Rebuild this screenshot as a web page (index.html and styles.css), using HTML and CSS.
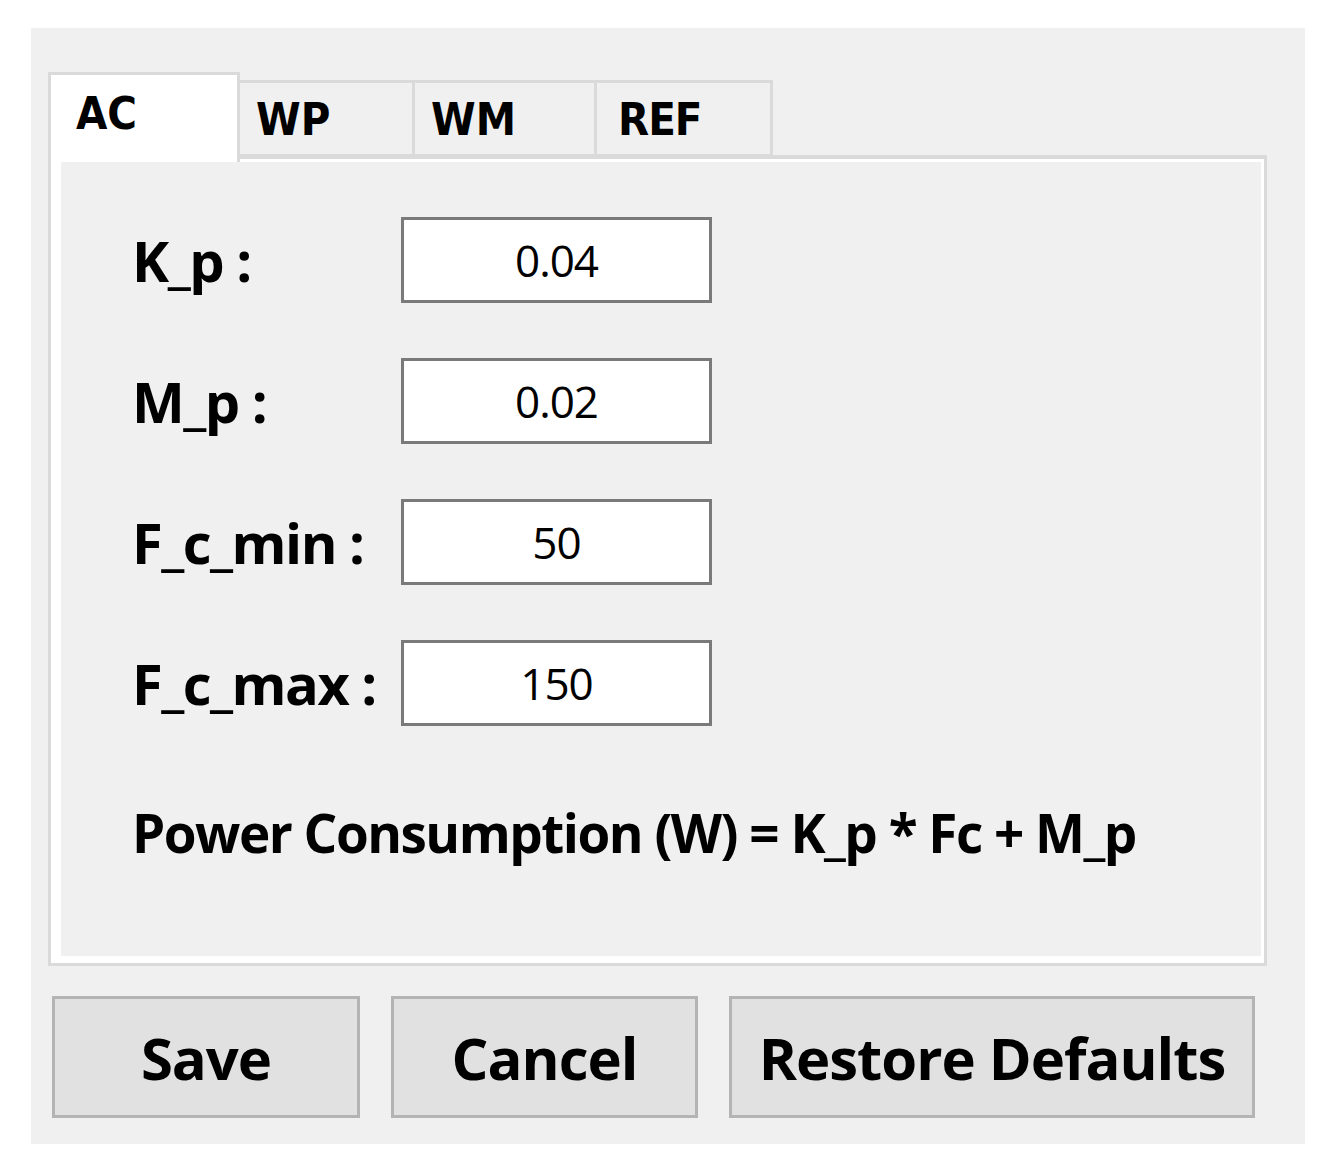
FILE: index.html
```html
<!DOCTYPE html>
<html>
<head>
<meta charset="utf-8">
<link rel="stylesheet" href="styles.css">
</head>
<body>
<div class="dialog">
  <div class="tabs">
    <div class="tab active">AC</div>
    <div class="tab t-wp">WP</div>
    <div class="tab t-wm">WM</div>
    <div class="tab t-ref">REF</div>
  </div>
  <div class="tab-body">
    <div class="tab-inner">
      <div class="row">
        <div class="label">K_p :</div>
        <div class="field">0.04</div>
      </div>
      <div class="row">
        <div class="label">M_p :</div>
        <div class="field">0.02</div>
      </div>
      <div class="row">
        <div class="label">F_c_min :</div>
        <div class="field">50</div>
      </div>
      <div class="row">
        <div class="label">F_c_max :</div>
        <div class="field">150</div>
      </div>
      <div class="formula">Power Consumption (W) = K_p * Fc + M_p</div>
    </div>
  </div>
  <div class="buttons">
    <div class="btn b-save">Save</div>
    <div class="btn b-cancel">Cancel</div>
    <div class="btn b-restore">Restore Defaults</div>
  </div>
</div>
</body>
</html>
```
FILE: styles.css
```css
html, body {
  margin: 0;
  padding: 0;
  background: #ffffff;
}
body {
  padding: 28px 0 0 31px;
  font-family: "Open Sans", "Noto Sans", sans-serif;
  color: #000;
}
.dialog {
  box-sizing: border-box;
  width: 1274px;
  height: 1116px;
  background: #f0f0f0;
  padding: 44px 38px 0 17px;
  display: flex;
  flex-direction: column;
}
.tabs {
  display: flex;
  align-items: flex-start;
  height: 90px;
  margin-bottom: -7px;
  position: relative;
  z-index: 1;
}
.tab {
  box-sizing: border-box;
  height: 77px;
  margin-top: 8px;
  border: 3px solid #dadada;
  border-left-width: 0;
  background: #f0f0f0;
  font-family: "DejaVu Sans Condensed", "DejaVu Sans", sans-serif;
  font-weight: bold;
  font-size: 45px;
  padding: 14px 0 0 16px;
  line-height: 45px;
}
.tab.active {
  height: 90px;
  margin-top: 0;
  width: 192px;
  border-left-width: 3px;
  border-bottom: 0;
  background: #ffffff;
  padding: 16px 0 0 25px;
}
.t-wp { width: 175px; }
.t-wm { width: 182px; }
.t-ref { width: 176px; padding-left: 21px; letter-spacing: -1px; }
.tab-body {
  box-sizing: border-box;
  width: 1219px;
  height: 811px;
  border: 3px solid #dadada;
  border-top-width: 4px;
  background: #ffffff;
  padding: 3px 3px 7px 10px;
}
.tab-inner {
  height: 100%;
  background: #f0f0f0;
  padding: 55px 0 0 71px;
  box-sizing: border-box;
  display: flex;
  flex-direction: column;
  gap: 55px;
}
.row {
  display: flex;
  align-items: center;
  height: 86px;
}
.label {
  width: 269px;
  font-weight: bold;
  font-size: 56px;
  letter-spacing: -1.5px;
}
.field {
  box-sizing: border-box;
  width: 311px;
  height: 86px;
  border: 3px solid #7a7a7a;
  background: #ffffff;
  display: flex;
  align-items: center;
  justify-content: center;
  font-size: 44px;
  letter-spacing: -1px;
}
.formula {
  margin-top: 15px;
  font-weight: bold;
  font-size: 53px;
  letter-spacing: -1.5px;
  white-space: nowrap;
}
.buttons {
  display: flex;
  gap: 31px;
  margin-top: 30px;
  padding-left: 4px;
}
.btn {
  box-sizing: border-box;
  height: 122px;
  border: 3px solid #b4b4b4;
  background: #e1e1e1;
  display: flex;
  align-items: center;
  justify-content: center;
  font-size: 58px;
  font-weight: bold;
  letter-spacing: -1px;
}
.b-save { width: 308px; }
.b-cancel { width: 307px; }
.b-restore { width: 526px; }
```
